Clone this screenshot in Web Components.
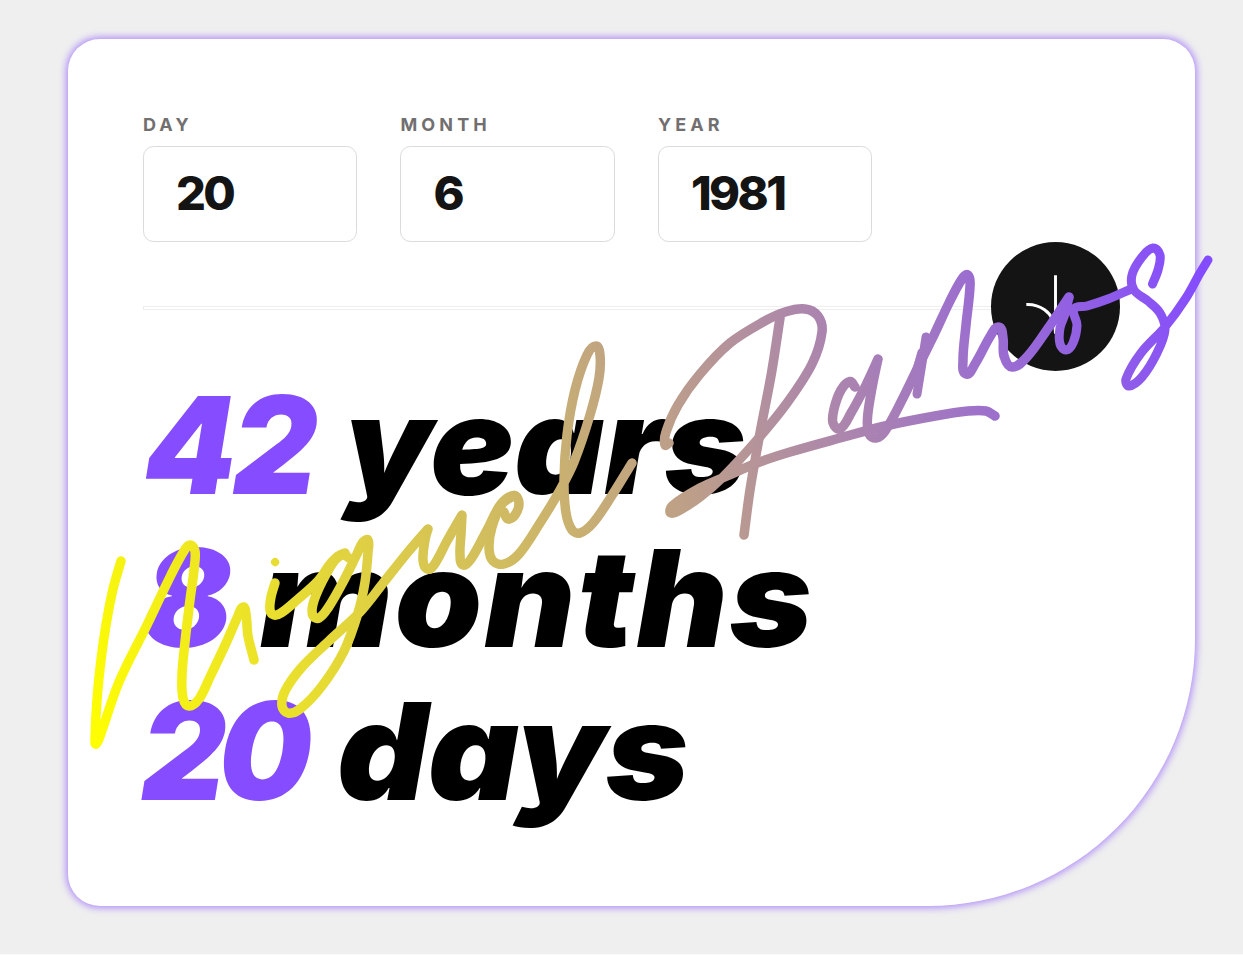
<!DOCTYPE html>
<html lang="en">
<head>
<meta charset="utf-8">
<title>Age calculator</title>
<style>
  html, body { margin: 0; }
  body { background: #efefef; height: 955px; box-sizing: border-box; border-bottom: 1px solid #fafafa; overflow: hidden; position: relative; font-family: Inter, "Open Sans", sans-serif; }
</style>
</head>
<body>
<age-card>
  <date-field slot="fields" label="DAY">20</date-field>
  <date-field slot="fields" label="MONTH">6</date-field>
  <date-field slot="fields" label="YEAR">1981</date-field>
  <age-line style="--n:1px;--w:201px;--ns:-4px;--us:0px;--s:1.033"><span slot="value">42</span>years</age-line>
  <age-line style="--n:0px;--w:117px;--ns:0px;--us:2px;--s:1.04"><span slot="value">8</span>months</age-line>
  <age-line style="--n:-2px;--w:194px;--ns:-8px;--us:0px;--s:1.045"><span slot="value">20</span>days</age-line>
</age-card>
<ink-signature></ink-signature>
<script>
const define = (name, html, setup) => customElements.define(name, class extends HTMLElement {
  constructor() {
    super();
    this.attachShadow({ mode: 'open' }).innerHTML = html;
  }
  connectedCallback() { if (setup) setup(this, this.shadowRoot); }
});

define('date-field', `
<style>
  :host { display: block; width: 214.4px; }
  .label { font: 700 18px/22px Inter, sans-serif; letter-spacing: 4.1px; color: #716f6f; padding-top: 1px; margin-bottom: 10px; }
  .box { box-sizing: border-box; height: 96px; border: 1px solid #dbdbdb; border-radius: 10.5px; background: #fff;
    padding: 0 0 4px 32px; display: flex; align-items: center; font: 800 47px/1 Inter, sans-serif; color: #141414; letter-spacing: -2.6px; }
</style>
<div class="label"></div><div class="box"><slot></slot></div>`,
(el, root) => { root.querySelector('.label').textContent = el.getAttribute('label'); });

define('submit-button', `
<style>
  :host { display: flex; width: 129px; height: 129px; border-radius: 50%; background: #141414; align-items: center; justify-content: center; flex: none; }
  svg { display: block; margin-bottom: 4px; }
</style>
<svg width="61" height="59" viewBox="0 0 46 44"><path fill="none" stroke="#fff" stroke-width="2.2" d="M1 22.019C8.333 21.686 23 25.616 23 44M23 44V0M45 22.019C37.667 21.686 23 25.616 23 44"/></svg>`);

define('age-line', `
<style>
  :host { display: flex; height: 153px; line-height: 153px; white-space: nowrap; font-family: Inter, sans-serif; font-size: 135px; font-weight: 900; font-style: italic; font-feature-settings: "cv11"; color: #000; }
  .value { width: var(--w); flex: none; }
  .value slot { display: block; color: #854dff; letter-spacing: var(--ns); text-indent: var(--n); transform: scaleX(.975); transform-origin: 0 0; }
  .unit { letter-spacing: var(--us); transform: scaleX(var(--s)); transform-origin: 0 0; }
</style>
<div class="value"><slot name="value"></slot></div><div class="unit"><slot></slot></div>`);

define('age-card', `
<style>
  :host { display: block; box-sizing: border-box; width: 1127px; height: 867px; margin: 39px 0 0 68px; padding: 74px 75px 0;
    background: #fff; border-radius: 32px 32px 267px 32px; box-shadow: 0 0 7px 2px rgba(133,77,255,.6); }
  .fields { display: flex; gap: 43.1px; }
  .rule { display: flex; align-items: center; }
  .line { flex: 1; height: 2px; border: 1px solid #eee; border-right: 0; margin-top: 2px; }
  .result { margin-top: -2px; }
</style>
<div class="fields"><slot name="fields"></slot></div>
<div class="rule"><div class="line"></div><submit-button></submit-button></div>
<div class="result"><slot></slot></div>`);

// Each pen stroke is a list of points joined by a smooth curve.
const STROKES = [
  [9.5, '121,561 113,589 106,625 101,660 97,700 95,740 96,744 100,736 119,682 147,625 171,575 184,551 190,545 195,551 194,570 190,600 185,642 182,675 183,698 189,706 199,699 210,677 227,641 238,616 243,607 246,614 248,636 254,660'],
  [8, '275,562 275.2,562.2'],
  [9.5, '275,583 271,597 270,610 274,615 281,613 297,600 318,581 331,563 342,554 349,558'],
  [9.5, '345,553 335,560 322,582 313,604 313,616 319,618 328,608 343,582 357,554 363,542 368,540 368,552 365,582 358,613 344,651 322,686 300,709 288,713 282,706 285,691 302,667 330,640 360,612 384,582 408,552 428,529 425,540 423,560 427,569 434,565 447,541 462,515 461,534 460,554 463,565 471,559 487,530 501,504 514,495.5 519,503 515,515 508,519 504,512'],
  [9.5, '514,495.5 502,504 492,527 489,548 493,561 504,564 519,554 540,523 560,490 574,462 590,415 599,378 600,355 596,346 587,355 575,390 567,435 564,480 566,513 572,530 580,533 593,523 611,497 632,463'],
  [9.5, '669,443 665,445 666,432 678,405 700,374 730,343 763,322 785,312 805,309 818,316 822,332 812,364 787,403 757,440 723,477 700,497 680,510 671,513 672,506 700,488 727,476 757,463 790,452 840,438 885,426 935,416 968,411 986,411 995,416'],
  [9.5, '780,318 771.5,373 760,433 750,490 744,535'],
  [9.5, '855,387 850,381.5 841,390 834,409 833,423 840,429 851,413 866,385 878,359 872,388 867.5,418 869,434 876,438 885,431 903,398 919,365 934,335 949,303 962,279 968,275 970,286 966,325 963,360 966,374 975,364 991,335 999,327 1003,338 1004,356 1012,367 1027,357 1049,327 1063,306 1069,297'],
  [9, '926,337 922,363 917,394'],
  [7, '921,352 912,383'],
  [9, '1069,298 1065,314 1060,328 1060,344 1066,350 1073,343 1077,325 1074,309 1087,306 1108,299 1131,289'],
  [9, '1152.5,284 1158,270 1160,255 1153,248 1142,257 1132,275 1134,290 1148,301 1160,313 1165,330 1157,353 1142,377 1129,386 1126,379 1141,353 1165,327 1186,298 1200,273 1208,260']
];
function smooth(text) {
  const p = text.split(' ').map(s => s.split(',').map(Number));
  const dist = (a, b) => Math.hypot(b[0] - a[0], b[1] - a[1]);
  const tangent = i => {
    const b = p[i], a = p[i - 1] || b, c = p[i + 1] || b;
    const la = dist(a, b) || 1, lc = dist(b, c) || 1;
    const dot = ((b[0] - a[0]) * (c[0] - b[0]) + (b[1] - a[1]) * (c[1] - b[1])) / (la * lc);
    if (dot < -.8) return [0, 0];
    const n = dist(a, c) || 1;
    return [(c[0] - a[0]) / n, (c[1] - a[1]) / n];
  };
  let d = 'M' + p[0];
  for (let i = 0; i < p.length - 1; i++) {
    const b = p[i], c = p[i + 1], h = dist(b, c) * .33, s = tangent(i), e = tangent(i + 1);
    d += `C${b[0] + s[0] * h},${b[1] + s[1] * h} ${c[0] - e[0] * h},${c[1] - e[1] * h} ${c}`;
  }
  return d;
}
define('ink-signature', `
<style>
  :host { position: absolute; left: 0; top: 0; width: 1243px; height: 954px; pointer-events: none; }
  svg { display: block; }
</style>
<svg width="1243" height="954" viewBox="0 0 1243 954" role="img" aria-label="Miguel Ramos">
  <defs><linearGradient id="ink" gradientUnits="userSpaceOnUse" x1="90" y1="750" x2="1240" y2="399"><stop offset="0" stop-color="#ff0"/><stop offset="1" stop-color="#844cff"/></linearGradient></defs>
  <g fill="none" stroke="url(#ink)" stroke-linecap="round" stroke-linejoin="round">${STROKES.map(([w, s]) => `<path stroke-width="${w}" d="${smooth(s)}"/>`).join('')}</g>
</svg>`);
</script>
</body>
</html>
